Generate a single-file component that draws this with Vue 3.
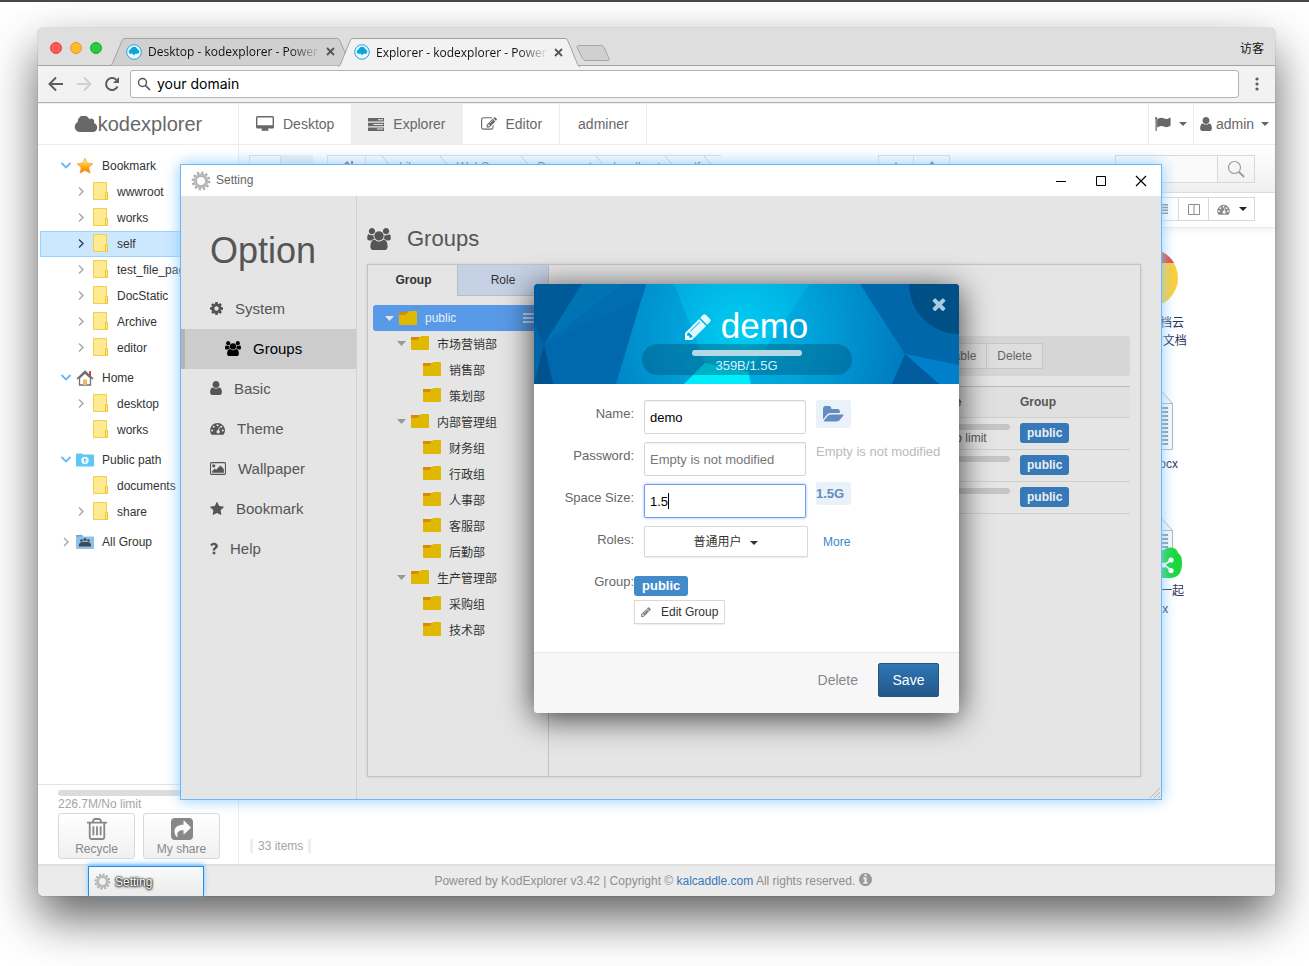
<script setup>
import { h, ref } from 'vue'

const glyphs = {
  cloud: ['0 256 2048 1280', 'M1984 1152q0 159-112.500 271.500t-271.500 112.500h-1088q-185 0-316.500-131.500t-131.500-316.500q0-132 71-241.500t187-163.500q-2-28-2-43 0-212 150-362t362-150q158 0 286.500 88t187.500 230q70-62 166-62 106 0 181 75t75 181q0 75-41 138 129 30 213 134.500t84 239.500z'],
  user: ['256 128 1280 1536', 'M1536 1399q0 109-62.500 187t-150.500 78h-854q-88 0-150.500-78t-62.500-187q0-85 8.500-160.500t31.500-152 58.500-131 94-89 134.500-34.500q131 128 313 128t313-128q76 0 134.500 34.500t94 89 58.500 131 31.500 152 8.500 160.500zm-256-887q0 159-112.500 271.500t-271.500 112.500-271.500-112.500-112.500-271.500 112.500-271.500 271.500-112.500 271.500 112.500 112.500 271.500z'],
  users: ['0 0 1920 1792', 'M593 896q-162 5-265 128h-134q-82 0-138-40.500t-56-118.500q0-353 124-353 6 0 43.500 21t97.500 42.500 119 21.500q67 0 133-23-5 37-5 66 0 139 81 256zm1071 637q0 120-73 189.500t-194 69.500h-874q-121 0-194-69.500t-73-189.500q0-53 3.500-103.500t14-109 26.500-108.500 43-97.500 62-81 85.500-53.500 111.500-20q10 0 43 21.500t73 48 107 48 135 21.500 135-21.500 107-48 73-48 43-21.500q61 0 111.500 20t85.500 53.500 62 81 43 97.500 26.500 108.500 14 109 3.500 103.500zm-1024-1277q0 106-75 181t-181 75-181-75-75-181 75-181 181-75 181 75 75 181zm704 384q0 159-112.500 271.500t-271.500 112.500-271.500-112.500-112.500-271.500 112.500-271.500 271.500-112.500 271.500 112.500 112.500 271.500zm576 225q0 78-56 118.500t-138 40.500h-134q-103-123-265-128 81-117 81-256 0-29-5-66 66 23 133 23 59 0 119-21.500t97.500-42.500 43.500-21q124 0 124 353zm-128-609q0 106-75 181t-181 75-181-75-75-181 75-181 181-75 181 75 75 181z'],
  cog: ['128 128 1536 1536', 'M1152 896q0-106-75-181t-181-75-181 75-75 181 75 181 181 75 181-75 75-181zm512-109v222q0 12-8 23t-20 13l-185 28q-19 54-39 91 35 50 107 138 10 12 10 25t-9 23q-27 37-99 108t-94 71q-12 0-26-9l-138-108q-44 23-91 38-16 136-29 186-7 28-36 28h-222q-14 0-24.500-8.500t-11.500-21.500l-28-184q-49-16-90-37l-141 107q-10 9-25 9-14 0-25-11-126-114-165-168-7-10-7-23 0-12 8-23 15-21 51-66.500t54-70.500q-27-50-41-99l-183-27q-13-2-21-12.500t-8-23.500v-222q0-12 8-23t19-13l186-28q14-46 39-92-40-57-107-138-10-12-10-24 0-10 9-23 26-36 98.500-107.500t94.500-71.500q13 0 26 10l138 107q44-23 91-38 16-136 29-186 7-28 36-28h222q14 0 24.500 8.500t11.500 21.500l28 184q49 16 90 37l142-107q9-9 24-9 13 0 25 10 129 119 165 170 7 8 7 22 0 12-8 23-15 21-51 66.500t-54 70.500q26 50 41 98l183 28q13 2 21 12.500t8 23.500z'],
  star: ['64 32 1664 1600', 'M1728 647q0 22-26 48l-363 354 86 500q1 7 1 20 0 21-10.500 35.500t-30.500 14.500q-19 0-40-12l-449-236-449 236q-22 12-40 12-21 0-31.500-14.500t-10.500-35.500q0-6 2-20l86-500-364-354q-25-27-25-48 0-37 56-46l502-73 225-455q19-41 49-41t49 41l225 455 502 73q56 9 56 46z'],
  picture: ['-64 128 1920 1536', 'M576 576q0 80-56 136t-136 56-136-56-56-136 56-136 136-56 136 56 56 136zm1024 384v448h-1408v-192l320-320 160 160 512-512zm96-704h-1600q-13 0-22.500 9.500t-9.500 22.500v1216q0 13 9.500 22.500t22.500 9.500h1600q13 0 22.500-9.500t9.500-22.500v-1216q0-13-9.500-22.500t-22.500-9.500zm160 32v1216q0 66-47 113t-113 47h-1600q-66 0-113-47t-47-113v-1216q0-66 47-113t113-47h1600q66 0 113 47t47 113z'],
  gauge: ['0 0 16 14', 'M8 1a8 8 0 0 0-8 8c0 1.600.4 3 1.200 4.200.2.300.4.400.7.400h12.200c.3 0 .5-.1.700-.4A8 8 0 0 0 8 1zM2.300 8a1.150 1.150 0 1 1 0 2.300 1.150 1.150 0 0 1 0-2.300zM4 4a1.150 1.150 0 1 1 0 2.300A1.150 1.150 0 0 1 4 4zM8 2.300a1.150 1.150 0 1 1 0 2.300 1.150 1.150 0 0 1 0-2.300zM9.600 5.200l.8.2-.8 3.500a1.800 1.800 0 1 1-.9-.2zM12 4a1.150 1.150 0 1 1 0 2.300A1.150 1.150 0 0 1 12 4zM13.700 8a1.150 1.150 0 1 1 0 2.300 1.150 1.150 0 0 1 0-2.300z'],
  question: ['0 0 8 14', 'M2.700 10.700h2.600v2.500H2.700zM2.700 9.600V8.900c0-1.400.8-2 1.500-2.500.7-.4 1-.7 1-1.300 0-.7-.6-1.100-1.300-1.100-.9 0-1.300.5-1.900 1.200L.3 3.900C1.100 2.500 2.300 1.800 4.100 1.800c2 0 3.800 1.300 3.800 3.200 0 1.600-1 2.300-1.800 2.800-.5.300-.8.500-.8 1v.8z'],
  trash: ['192 128 1408 1536', 'M704 736v576q0 14-9 23t-23 9h-64q-14 0-23-9t-9-23v-576q0-14 9-23t23-9h64q14 0 23 9t9 23zm256 0v576q0 14-9 23t-23 9h-64q-14 0-23-9t-9-23v-576q0-14 9-23t23-9h64q14 0 23 9t9 23zm256 0v576q0 14-9 23t-23 9h-64q-14 0-23-9t-9-23v-576q0-14 9-23t23-9h64q14 0 23 9t9 23zm128 724v-948h-896v948q0 22 7 40.500t14.500 27 10.500 8.500h832q3 0 10.500-8.500t14.500-27 7-40.500zm-672-1076h448l-48-117q-7-9-17-11h-317q-10 2-17 11zm928 32v64q0 14-9 23t-23 9h-96v948q0 83-47 143.500t-113 60.500h-832q-66 0-113-58.500t-47-141.500v-952h-96q-14 0-23-9t-9-23v-64q0-14 9-23t23-9h309l70-167q15-37 54-63t79-26h320q40 0 79 26t54 63l70 167h309q14 0 23 9t9 23z'],
  share: ['0 0 22 22', 'M4 0h14a4 4 0 0 1 4 4v14a4 4 0 0 1-4 4H4a4 4 0 0 1-4-4V4a4 4 0 0 1 4-4zM12.500 3.200v3.600C7 6.800 3.500 9 3.500 13.500c0 2 .8 4 2.300 5.400.5.300.9 0 .7-.6-.5-4.300 1-6 6-6v3.400c0 .6.5.8 1 .4l6-5.900c.4-.4.400-.8 0-1.200l-6-6c-.5-.4-1-.3-1 .2z'],
  pencil: ['128 128 1536 1536', 'M491 1536l91-91-235-235-91 91v107h128v128h107zm523-928q0-22-22-22-10 0-17 7l-542 542q-7 7-7 17 0 22 22 22 10 0 17-7l542-542q7-7 7-17zm-54-192l416 416-832 832h-416v-416zm683 96q0 53-37 90l-166 166-416-416 166-165q36-38 90-38 53 0 91 38l235 234q37 39 37 91z'],
  edit: ['0 128 1792 1536', 'M888 1184l116-116-152-152-116 116v56h96v96h56zm440-720q-16-16-33 1l-350 350q-17 17-1 33t33-1l350-350q17-17 1-33zm80 594v190q0 119-84.500 203.500t-203.500 84.500h-832q-119 0-203.500-84.500t-84.500-203.500v-832q0-119 84.500-203.500t203.500-84.500h832q63 0 117 25 15 7 18 23 3 17-9 29l-49 49q-14 14-32 8-23-6-45-6h-832q-66 0-113 47t-47 113v832q0 66 47 113t113 47h832q66 0 113-47t47-113v-126q0-13 9-22l64-64q15-15 35-7t20 29zm-96-738l288 288-672 672h-288v-288zm444 132l-92 92-288-288 92-92q28-28 68-28t68 28l152 152q28 28 28 68t-28 68z'],
  info: ['128 128 1536 1536', 'M1152 1376v-160q0-14-9-23t-23-9h-96v-512q0-14-9-23t-23-9h-320q-14 0-23 9t-9 23v160q0 14 9 23t23 9h96v320h-96q-14 0-23 9t-9 23v160q0 14 9 23t23 9h448q14 0 23-9t9-23zm-128-896v-160q0-14-9-23t-23-9h-192q-14 0-23 9t-9 23v160q0 14 9 23t23 9h192q14 0 23-9t9-23zm640 416q0 209-103 385.500t-279.500 279.500-385.500 103-385.500-103-279.500-279.500-103-385.500 103-385.500 279.500-279.500 385.500-103 385.500 103 279.500 279.500 103 385.500z'],
  folderOpen: ['-64 256 1920 1280', 'M1815 952q0 31-31 66l-336 396q-43 51-120.500 86.500t-143.500 35.500h-1088q-34 0-60.500-13t-26.500-43q0-31 31-66l336-396q43-51 120.500-86.500t143.500-35.500h1088q34 0 60.500 13t26.500 43zm-343-344v160h-832q-94 0-197 47.500t-164 119.500l-337 396-5 6q0-4-.5-12.500t-.5-12.500v-960q0-92 66-158t158-66h320q92 0 158 66t66 158v32h544q92 0 158 66t66 158z'],
  times: ['302 238 1188 1316', 'M1490 1322q0 40-28 68l-136 136q-28 28-68 28t-68-28l-294-294-294 294q-28 28-68 28t-68-28l-136-136q-28-28-28-68t28-68l294-294-294-294q-28-28-28-68t28-68l136-136q28-28 68-28t68 28l294 294 294-294q28-28 68-28t68 28l136 136q28 28 28 68t-28 68l-294 294 294 294q28 28 28 68z'],
  flag: ['0 0 16 14', 'M1.200 0a1.200 1.200 0 0 1 .6 2.200V13.500c0 .3-.2.5-.5.500H1c-.3 0-.5-.2-.5-.5V2.200A1.200 1.200 0 0 1 1.200 0zM2.600 2.100C4 1.300 5.300.8 6.600.8c1.900 0 2.900 1.200 4.500 1.200 1.200 0 2.400-.6 3.700-1.300.4-.2.8 0 .8.500v7.100c0 .3-.2.500-.5.700-1.300.7-2.500 1.200-3.800 1.200-1.900 0-2.900-1.200-4.800-1.200-1.200 0-2.400.5-3.700 1.200-.4.200-.7 0-.7-.3V2.700c0-.2.200-.4.500-.6z'],
  monitor: ['0 0 18 16', 'M1.500 0h15A1.500 1.500 0 0 1 18 1.500v9.500a1.500 1.500 0 0 1-1.500 1.500H12c0 .8.600 1.300.6 1.800 0 .3-.2.500-.5.500H5.900c-.3 0-.5-.2-.5-.5 0-.5.600-1 .6-1.800H1.500A1.500 1.500 0 0 1 0 11V1.500A1.500 1.500 0 0 1 1.500 0zM1.400 1.400V9.300h15.200V1.400z'],
  tasks: ['0 0 16 13', 'M0 0h16v3.500H0zM10 1.200v1h5v-1zM0 4.700h16v3.500H0zM5.500 5.900v1h9.500v-1zM0 9.400h16v3.500H0zM9 10.600v1h6v-1z'],
  caret: ['0 0 8 4', 'M0 0h8L4 4z'],
  branch: ['0 0 9 5', 'M0 0h9L4.500 5z'],
  lines: ['0 0 10 10', 'M0 0h10v1.500H0zM0 2.800h10v1.500H0zM0 5.600h10v1.500H0zM0 8.400h10v1.500H0z']
}
const Icon = (p) => h('svg', { viewBox: glyphs[p.name][0], width: p.w, height: p.h || p.w, fill: 'currentColor', 'aria-hidden': 'true' },
  [h('path', { d: glyphs[p.name][1], 'fill-rule': 'evenodd' })])
Icon.props = ['name', 'w', 'h']

// Metallic gear: a ring with twelve teeth around it
const Gear = (p) => h('svg', { viewBox: '0 0 20 20', width: p.w, height: p.w, fill: 'none', 'aria-hidden': 'true' }, [
  h('circle', { cx: 10, cy: 10, r: 8.2, stroke: '#a9abad', 'stroke-width': 2.4, 'stroke-dasharray': '2.200 2.093' }),
  h('circle', { cx: 10, cy: 10, r: 6, stroke: '#b9bbbd', 'stroke-width': 2.8 }),
  h('circle', { cx: 10, cy: 10, r: 4.6, stroke: '#9b9da0', 'stroke-width': 0.7 })
])
Gear.props = ['w']

const browserTabs = ['Desktop - kodexplorer - Power', 'Explorer - kodexplorer - Power']
const nav = [
  { label: 'Desktop', icon: 'monitor', w: 18, h: 16 },
  { label: 'Explorer', icon: 'tasks', w: 16, h: 13, on: true },
  { label: 'Editor', icon: 'edit', w: 16, h: 14 },
  { label: 'adminer' }
]
const places = [
  { label: 'Bookmark', kind: 'star', open: true, children: [
    { label: 'wwwroot', more: true }, { label: 'works', more: true }, { label: 'self', more: true, on: true },
    { label: 'test_file_page', more: true }, { label: 'DocStatic', more: true }, { label: 'Archive', more: true }, { label: 'editor', more: true }] },
  { label: 'Home', kind: 'home', open: true, children: [{ label: 'desktop', more: true }, { label: 'works' }] },
  { label: 'Public path', kind: 'public', open: true, children: [{ label: 'documents' }, { label: 'share', more: true }] },
  { label: 'All Group', kind: 'group', children: [] }
]
const crumbs = ['Library', 'WebServer', 'Document', 'localhost', 'self']
const options = [
  { label: 'System', icon: 'cog', w: 13, h: 13 },
  { label: 'Groups', icon: 'users', w: 16, h: 15, on: true },
  { label: 'Basic', icon: 'user', w: 12, h: 14 },
  { label: 'Theme', icon: 'gauge', w: 15, h: 13 },
  { label: 'Wallpaper', icon: 'picture', w: 16, h: 13 },
  { label: 'Bookmark', icon: 'star', w: 14, h: 13 },
  { label: 'Help', icon: 'question', w: 8, h: 14 }
]
const groups = [
  { label: '市场营销部', level: 1 }, { label: '销售部', level: 2 }, { label: '策划部', level: 2 },
  { label: '内部管理组', level: 1 }, { label: '财务组', level: 2 }, { label: '行政组', level: 2 },
  { label: '人事部', level: 2 }, { label: '客服部', level: 2 }, { label: '后勤部', level: 2 },
  { label: '生产管理部', level: 1 }, { label: '采购组', level: 2 }, { label: '技术部', level: 2 }
]
const users = ['22.6M/No limit', '', '']
const address = ref('your domain')
const search = ref('')
const name = ref('demo')
const password = ref('')
const size = ref('1.5')
const role = ref('普通用户')
</script>

<template>
  <div class="stage">
    <div class="browser">
      <div class="tabstrip">
        <div class="lights"><i class="red"></i><i class="amber"></i><i class="green"></i></div>
        <div v-for="(t, i) in browserTabs" :key="t" class="btab" :class="{ front: i === 1 }">
          <svg class="shape" viewBox="0 0 242 30" preserveAspectRatio="none" aria-hidden="true">
            <path d="M0 29.500C2 29 2 28 3 26L12 4Q13 1.500 15 1.500H227Q229 1.500 230 4L239 26C240 28 240 29 242 29.500" />
          </svg>
          <svg class="fav" viewBox="0 0 16 16" width="16" height="16" aria-hidden="true">
            <circle cx="8" cy="8" r="7.300" fill="#eaf8fd" stroke="#16a9dc" />
            <path d="M4.500 9.800a2.200 2.200 0 0 1 0-4.300 3.600 3.600 0 0 1 6.900-.3 2.400 2.400 0 0 1 .2 4.600H9.300L8 11.600 6.800 9.800z" fill="#0ba5da" />
          </svg>
          <span class="btitle">{{ t }}</span>
          <button class="bclose" aria-label="Close tab"><svg viewBox="0 0 9 9" width="9" height="9"><path d="M1 1l7 7M8 1l-7 7" stroke="#555" stroke-width="1.800" /></svg></button>
        </div>
        <button class="newtab" aria-label="New tab">
          <svg viewBox="0 0 34 17" width="34" height="17"><path d="M3 .5H25Q27 .5 28 2.500L33 13.500Q34 15.500 32 15.500H10Q7.500 15.500 6.500 13.500L1 2.500Q.3.500 3 .5z" fill="#d0d0d0" stroke="#a6a6a6" /></svg>
        </button>
        <span class="guest">访客</span>
      </div>

      <div class="addressbar">
        <button aria-label="Back"><svg viewBox="0 0 16 16" width="16" height="16"><path d="M8 1.500L1.500 8 8 14.500M2 8h13" fill="none" stroke="#5c5c5c" stroke-width="2" /></svg></button>
        <button aria-label="Forward"><svg viewBox="0 0 16 16" width="16" height="16"><path d="M8 1.500L14.500 8 8 14.500M14 8H1" fill="none" stroke="#d0d0d0" stroke-width="2" /></svg></button>
        <button aria-label="Reload"><svg viewBox="0 0 16 16" width="16" height="16"><path d="M13.500 10.500A6 6 0 1 1 12.300 3.800" fill="none" stroke="#5c5c5c" stroke-width="2" /><path d="M15 1v6H9z" fill="#5c5c5c" /></svg></button>
        <label class="omnibox">
          <svg viewBox="0 0 14 14" width="14" height="14" aria-hidden="true"><circle cx="5.500" cy="5.500" r="4" fill="none" stroke="#555" stroke-width="1.500" /><path d="M8.500 8.500l4.500 4.500" stroke="#555" stroke-width="1.700" /></svg>
          <input v-model="address" aria-label="Address" />
        </label>
        <button aria-label="Menu" class="kebab"><svg viewBox="0 0 4 14" width="4" height="14" fill="#5c5c5c"><circle cx="2" cy="2" r="1.600" /><circle cx="2" cy="7" r="1.600" /><circle cx="2" cy="12" r="1.600" /></svg></button>
      </div>

      <header class="apphead">
        <div class="logo"><Icon name="cloud" w="24" h="17" />kodexplorer</div>
        <nav>
          <a v-for="n in nav" :key="n.label" href="#" :class="{ on: n.on }"><Icon v-if="n.icon" :name="n.icon" :w="n.w" :h="n.h" />{{ n.label }}</a>
        </nav>
        <div class="account">
          <button class="lang" aria-label="Language"><Icon name="flag" w="16" h="14" /><Icon name="caret" w="8" h="4" /></button>
          <button class="me"><Icon name="user" w="12" h="14" /><span>admin</span><Icon name="caret" w="8" h="4" /></button>
        </div>
      </header>

      <div class="work">
        <aside class="side">
          <div class="tree">
            <section v-for="p in places" :key="p.label">
              <div class="node">
                <svg class="chev" viewBox="0 0 12 12" width="12" height="12"><path v-if="p.open" d="M1.500 3l4.500 4.500 4.500-4.500" fill="none" stroke="#6fb5f3" stroke-width="1.800" /><path v-else d="M4 2l4 4-4 4" fill="none" stroke="#a6a6a6" stroke-width="1.400" /></svg>
                <span class="pic">
                  <svg v-if="p.kind === 'star'" viewBox="0 0 18 17" width="18" height="17"><defs><linearGradient id="gold" x2="0" y2="1"><stop offset=".2" stop-color="#ffe27a" /><stop offset=".6" stop-color="#ffa60a" /><stop offset="1" stop-color="#f08000" /></linearGradient></defs><path d="M9 0l2.300 5.100 5.700.6-4.200 3.900 1.200 5.600L9 12.500l-5 2.700 1.200-5.600L1 5.700l5.700-.6z" fill="url(#gold)" stroke="#e99a2a" stroke-width=".6" /></svg>
                  <svg v-else-if="p.kind === 'home'" viewBox="0 0 18 16" width="18" height="16"><path d="M13 1h2v5h-2z" fill="#e0452c" /><path d="M3.500 8v7h11V8L9 3z" fill="#fff" stroke="#707070" stroke-width="1.300" /><path d="M1 9l8-7.500L17 9" fill="none" stroke="#6c6c6c" stroke-width="1.700" /><path d="M7 9.500h4V15H7z" fill="#f0b95e" /></svg>
                  <svg v-else-if="p.kind === 'public'" viewBox="0 0 18 14" width="18" height="14"><path d="M0 1.500Q0 .5 1 .5h5l1 1h10q1 0 1 1v10q0 1-1 1H1q-1 0-1-1z" fill="#5cc8f5" /><circle cx="9" cy="7.500" r="3.700" fill="#eefaff" /><path d="M8 5l3 2-2 1 1 2-2-1z" fill="#5cc8f5" /></svg>
                  <svg v-else viewBox="0 0 18 14" width="18" height="14"><path d="M0 1Q0 0 1 0h5l1 1.500h10q1 0 1 1V13q0 1-1 1H1q-1 0-1-1z" fill="#8fc1e8" /><path d="M0 1Q0 0 1 0h5l1 1.500H0z" fill="#6c9dc4" /><g fill="#3b4a58"><circle cx="9" cy="4.500" r="1.600" /><circle cx="5.500" cy="5.500" r="1.300" /><circle cx="12.500" cy="5.500" r="1.300" /><path d="M3 11.500V9Q4.500 6.500 7 7h4q2.500-.5 4 2v2.500z" /></g></svg>
                </span>
                {{ p.label }}
              </div>
              <div v-for="c in p.children" :key="c.label" class="node sub" :class="{ on: c.on }">
                <svg class="chev" viewBox="0 0 12 12" width="12" height="12"><path v-if="c.more" d="M4 1.500l4 4-4 4" fill="none" :stroke="c.on ? '#2f3f5f' : '#a6a6a6'" stroke-width="1.400" /></svg>
                <span class="pic"><svg viewBox="0 0 16 18" width="16" height="18"><path d="M.5.500h13v17H.5z" fill="#ffe991" stroke="#f0cf4a" /><path d="M12.500 10.500h2v7h-2z" fill="#ffe991" stroke="#ecc530" /></svg></span>
                {{ c.label }}
              </div>
            </section>
          </div>
          <div class="quota">
            <div class="meter"></div>
            <span>226.7M/No limit</span>
            <div class="pair">
              <button><Icon name="trash" w="20" h="22" />Recycle</button>
              <button><Icon name="share" w="22" />My share</button>
            </div>
          </div>
        </aside>

        <main class="main">
          <div class="bar1">
            <div class="seg"><button aria-label="Back in history"></button><button class="off" aria-label="Forward in history"></button></div>
            <div class="crumbs">
              <a href="#" class="house" aria-label="Home"><svg viewBox="0 0 16 14" width="16" height="14"><path d="M8 0L1 7h2v6h10V7h2z" fill="#666" /><path d="M12 0h2v4h-2z" fill="#e0452c" /></svg></a>
              <a v-for="c in crumbs" :key="c" href="#"><svg viewBox="0 0 17 26" width="17" height="26" aria-hidden="true"><path d="M0 0l11 13L0 26" fill="none" stroke="#ccc" /></svg><span>{{ c }}</span></a>
              <svg viewBox="0 0 17 26" width="17" height="26" aria-hidden="true"><path d="M0 0l11 13L0 26" fill="none" stroke="#ccc" /></svg>
            </div>
            <div class="seg tail"><button aria-label="Favourite"><Icon name="star" w="12" /></button><button aria-label="Up"><svg viewBox="0 0 12 14" width="12" height="14"><path d="M6 0L1 6h3v7h4V6h3z" fill="#777" /></svg></button></div>
            <div class="find"><input v-model="search" aria-label="Search" /><button aria-label="Search files"><svg viewBox="0 0 18 18" width="18" height="18"><circle cx="7.500" cy="7.500" r="6" fill="none" stroke="#a0a0a0" stroke-width="1.200" /><path d="M12 12l5 5" stroke="#999" stroke-width="1.800" /></svg></button></div>
          </div>
          <div class="bar2">
            <div class="views">
              <button aria-label="List view"><Icon name="lines" w="10" /></button>
              <button aria-label="Split view"><svg viewBox="0 0 12 11" width="12" height="11"><path d="M.5.500h11v10H.5zM6 .5v10" fill="none" stroke="#8c8c8c" /></svg></button>
              <button aria-label="Theme"><Icon name="gauge" w="13" h="11" /><Icon name="caret" w="8" h="4" class="dark" /></button>
            </div>
          </div>
          <div class="files">
            <figure>
              <svg viewBox="0 0 60 60" width="60" height="60"><circle cx="30" cy="30" r="29" fill="#fccf35" /><path d="M5 15a29 29 0 0 1 50 0H30a15 15 0 0 0-14 11z" fill="#de4b40" /><path d="M5 15l12 22 13 8-5 14A29 29 0 0 1 5 15z" fill="#3fa757" /><circle cx="29" cy="30" r="11" fill="#4a8af4" stroke="#fff" stroke-width="2" /></svg>
              <figcaption>可道云档云<br />KOD 的文档</figcaption>
            </figure>
            <figure>
              <svg viewBox="0 0 44 60" width="44" height="60"><path d="M.5.500h32l11 12v46H.5z" fill="#fbfcfd" stroke="#b0b6bb" /><path d="M32.500.500v12h11" fill="none" stroke="#b0b6bb" /><path d="M6 17h33M6 21h33M6 25h33M6 29h33M6 33h33M6 37h33M6 41h33M6 45h33M6 49h33M6 53h33" stroke="#8e9aa6" stroke-width="2" /></svg>
              <figcaption>kod.docx</figcaption>
            </figure>
            <figure class="shared">
              <svg viewBox="0 0 44 60" width="44" height="60"><path d="M.5.500h32l11 12v46H.5z" fill="#fbfcfd" stroke="#b0b6bb" /><path d="M32.500.500v12h11" fill="none" stroke="#b0b6bb" /><path d="M6 17h33M6 21h33M6 25h33M6 29h33M6 33h33M6 37h33" stroke="#8e9aa6" stroke-width="2" /></svg>
              <svg class="blob" viewBox="0 0 34 32" width="34" height="32"><path d="M8 31a8 8 0 0 1-2-15Q6 8 12 6Q16 0 22 .5Q28 1 29 6Q33 8 33 16Q33 30 22 31z" fill="#19d83a" /><path d="M22 13l-7 5 7 5" fill="none" stroke="#fff" stroke-width="1.600" /><g fill="#fff"><circle cx="22" cy="13" r="2.600" /><circle cx="14.500" cy="18" r="2.600" /><circle cx="22" cy="23.500" r="2.600" /></g></svg>
              <figcaption>我们在一起<br />.docx</figcaption>
            </figure>
          </div>
          <div class="count"><span>33 items</span></div>
        </main>
      </div>

      <footer class="foot">
        <p>Powered by KodExplorer v3.42 | Copyright © <a href="#">kalcaddle.com</a> All rights reserved. <Icon name="info" w="13" /></p>
        <button class="task"><Gear w="17" /><span>Setting</span></button>
      </footer>

      <section class="setting" aria-label="Setting">
        <div class="title">
          <Gear w="20" /><span>Setting</span>
          <div class="ctl">
            <button aria-label="Minimize"><svg viewBox="0 0 12 12" width="12" height="12"><path d="M1 6.500h10" stroke="#000" /></svg></button>
            <button aria-label="Maximize"><svg viewBox="0 0 12 12" width="12" height="12"><path d="M1.500 1.500h9v9h-9z" fill="none" stroke="#000" /></svg></button>
            <button aria-label="Close"><svg viewBox="0 0 12 12" width="12" height="12"><path d="M1 1l10 10M11 1L1 11" stroke="#000" stroke-width="1.200" /></svg></button>
          </div>
        </div>
        <div class="pane">
          <div class="opts">
            <h1>Option</h1>
            <a v-for="o in options" :key="o.label" href="#" :class="{ on: o.on }"><Icon :name="o.icon" :w="o.w" :h="o.h" />{{ o.label }}</a>
          </div>
          <div class="content">
            <h2><Icon name="users" w="24" h="22" />Groups</h2>
            <div class="panel">
              <div class="left">
                <div class="tabs"><button class="on">Group</button><button>Role</button></div>
                <div class="gtree">
                  <div class="grow root"><Icon name="branch" w="9" h="5" class="arr" /><svg class="fold" viewBox="0 0 18 14" width="18" height="14"><path d="M0 1.500h9l1-1.500h7q1 0 1 1v12q0 1-1 1H1q-1 0-1-1z" fill="#e0b800" /><path d="M0 1h9L7 3.500Q6 4 5 4H0z" fill="#d98a00" /></svg><span>public</span>
                    <svg class="burger" viewBox="0 0 12 10" width="12" height="10"><path d="M0 1h12M0 5h12M0 9h12" stroke="#dfeaf8" stroke-width="1.500" /></svg></div>
                  <div v-for="g in groups" :key="g.label" class="grow" :class="'lv' + g.level">
                    <Icon v-if="g.level === 1" name="branch" w="9" h="5" class="arr" />
                    <svg class="fold" viewBox="0 0 18 14" width="18" height="14"><path d="M0 1.500h9l1-1.500h7q1 0 1 1v12q0 1-1 1H1q-1 0-1-1z" fill="#e0b800" /><path d="M0 1h9L7 3.500Q6 4 5 4H0z" fill="#d98a00" /></svg><span>{{ g.label }}</span>
                  </div>
                </div>
              </div>
              <div class="right">
                <div class="acts"><button>Enable</button><button>Delete</button></div>
                <table>
                  <colgroup><col /><col class="cs" /><col class="cg" /></colgroup>
                  <thead><tr><th></th><th>Disk size</th><th>Group</th></tr></thead>
                  <tbody>
                    <tr v-for="(u, i) in users" :key="i"><td></td><td class="use"><div class="meter"></div>{{ u }}</td><td><b class="tag">public</b></td></tr>
                  </tbody>
                </table>
              </div>
            </div>
          </div>
        </div>
        <svg class="grip" viewBox="0 0 10 10" width="10" height="10" aria-hidden="true"><path d="M0 10L10 0M4 10l6-6M8 10l2-2" stroke="#aaa" stroke-width=".8" /></svg>

        <form class="modal" @submit.prevent>
          <div class="hero">
            <svg class="poly" viewBox="0 0 425 100" preserveAspectRatio="none" aria-hidden="true">
              <defs><radialGradient id="glow" gradientUnits="userSpaceOnUse" cx="208" cy="48" r="200"><stop offset="0" stop-color="#00cdf2" /><stop offset=".35" stop-color="#00b0e2" /><stop offset=".75" stop-color="#0084c6" /><stop offset="1" stop-color="#006aae" /></radialGradient></defs>
              <path d="M0 0h425v100H0z" fill="url(#glow)" />
              <path d="M112 0h28l31 79-21 21H82z" fill="#0077c0" fill-opacity=".3" />
              <path d="M276 0h50l45 70-13 30H217l-2-12z" fill="#0077c0" fill-opacity=".22" />
              <path d="M88 0h24L82 100H19L10 60z" fill="#0068ac" />
              <path d="M48 0h40L10 60z" fill="#0073b2" />
              <path d="M88 0h24l-4 14L10 60z" fill="#006db0" />
              <path d="M0 0h48L10 60 0 42z" fill="#005a98" />
              <path d="M0 42l10 18L0 100z" fill="#0064a6" />
              <path d="M10 60l9 40H0z" fill="#00518c" />
              <path d="M171 79l-21 21h67l-3-12z" fill="#00ecfa" />
              <path d="M326 0h99v81l-54-11z" fill="#0067ab" />
              <path d="M371 70l54 11v19h-20z" fill="#0080cb" />
              <path d="M371 70l34 30h-47z" fill="#005c9c" />
            </svg>
            <button type="button" class="x" aria-label="Close"><Icon name="times" w="14" /></button>
            <div class="who"><Icon name="pencil" w="26" /><strong>demo</strong></div>
            <div class="pill"><div class="meter"></div><span>359B/1.5G</span></div>
          </div>
          <div class="fields">
            <label for="f-name">Name:</label>
            <div class="val"><input id="f-name" v-model="name" /><button type="button" class="chip open" aria-label="Open folder"><Icon name="folderOpen" w="21" h="17" /></button></div>
            <label for="f-pass">Password:</label>
            <div class="val"><input id="f-pass" v-model="password" type="password" placeholder="Empty is not modified" /><span class="hint">Empty is not modified</span></div>
            <label for="f-size">Space Size:</label>
            <div class="val"><span class="typing"><input id="f-size" v-model="size" class="focus" /><i></i></span><span class="chip gb">1.5G</span></div>
            <label for="f-role">Roles:</label>
            <div class="val"><span class="pick"><select id="f-role" v-model="role"><option>普通用户</option></select><Icon name="caret" w="8" h="4" /></span><a href="#" class="more">More</a></div>
            <span class="lab">Group:</span>
            <div class="grp"><b class="tag">public</b><button type="button"><Icon name="pencil" w="10" />Edit Group</button></div>
          </div>
          <div class="end"><button type="button" class="del">Delete</button><button type="submit" class="save">Save</button></div>
        </form>
      </section>
    </div>
  </div>
</template>

<style>
html, body { margin: 0; background: #fff; }
</style>

<style scoped>
.stage, .stage * { box-sizing: border-box; }
.stage { min-height: 100vh; padding: 26px 34px 70px 38px; border-top: 2px solid #4a4748; display: flex; overflow: hidden; font: 12px "Liberation Sans", "Noto Sans CJK SC", sans-serif; color: #333; }
button, input, select { font: inherit; color: inherit; margin: 0; padding: 0; border: 0; background: none; outline: 0; }
button { display: flex; align-items: center; justify-content: center; }
a { color: inherit; text-decoration: none; }
svg { display: block; flex: none; }
.browser { position: relative; flex: 1; min-width: 0; display: flex; flex-direction: column; border-radius: 5px; background: #fff; box-shadow: 0 0 1px rgba(0,0,0,.6), 0 22px 48px rgba(0,0,0,.62); }

.tabstrip { height: 38px; background: #dedede; border-bottom: 1px solid #a2a2a2; border-radius: 5px 5px 0 0; display: flex; padding: 9px 11px 0 12px; }
.lights { display: flex; gap: 8px; padding-top: 5px; width: 60px; }
.lights i { width: 12px; height: 12px; border-radius: 50%; }
.red { background: #fc5b57; border: 1px solid #e2443f; }
.amber { background: #fdbc2f; border: 1px solid #dfa023; }
.green { background: #29ca41; border: 1px solid #1eac2c; }
.btab { position: relative; width: 242px; height: 29px; padding: 0 17px 0 16px; display: flex; align-items: center; color: #111; }
.btab.front { margin-left: -14px; height: 30px; }
.shape { position: absolute; left: 0; top: 0; width: 100%; height: 29px; fill: #d0d0d0; stroke: #a2a2a2; }
.front .shape { fill: #f2f2f2; height: 30px; }
.fav, .btitle, .bclose { position: relative; }
.btitle { flex: 1; margin: 0 5px 0 6px; white-space: nowrap; font-family: "Open Sans", sans-serif; font-size: 12px; mask-image: linear-gradient(90deg, #000 82%, transparent 100%); }
.newtab { margin: 8px 0 0 -4px; height: 17px; }
.guest { margin-left: auto; padding-top: 2px; color: #111; }

.addressbar { height: 37px; background: #f2f2f2; border-bottom: 1px solid #b2b2b2; display: flex; align-items: center; gap: 12px; padding: 0 16px 0 10px; }
.omnibox { flex: 1; height: 28px; display: flex; align-items: center; gap: 6px; padding: 0 6px; border: 1px solid #b4b4b4; border-radius: 3px; background: #fff; margin-left: -2px; }
.omnibox input { flex: 1; font: 14px Inter, sans-serif; color: #000; padding-bottom: 2px; }
.kebab { width: 4px; margin-left: 4px; }

.apphead { height: 42px; display: flex; border-top: 1px solid #f0f0f0; border-bottom: 1px solid #ececec; color: #686868; font-size: 14px; }
.logo { width: 201px; display: flex; align-items: center; justify-content: center; font-size: 20px; border-right: 1px solid #ececec; }
nav { display: flex; }
nav a { display: flex; align-items: center; gap: 9px; padding: 0 17px; }
nav a.on { background: #eee; }
nav a:nth-child(n+3) { border-right: 1px solid #ececec; padding: 0 17px 0 18px; }
.account { margin-left: auto; display: flex; }
.account button { border-left: 1px solid #ececec; }
.lang { width: 45px; gap: 8px; }
.me { width: 82px; }
.me span { margin: 0 7px 0 4px; }

.work { flex: 1; display: flex; min-height: 0; }
.side { width: 201px; border-right: 1px solid #ececec; display: flex; flex-direction: column; }
.tree { flex: 1; padding: 8px 0 0 2px; }
.tree section { padding-bottom: 4px; }
.node { height: 26px; display: flex; align-items: center; padding-left: 20px; white-space: nowrap; overflow: hidden; }
.node.sub { padding-left: 35px; }
.node.on { background: #cce8ff; box-shadow: inset 0 0 0 1px #99d1ff; }
.chev { margin-right: 3px; }
.pic { width: 20px; margin-right: 7px; display: flex; justify-content: center; flex: none; }
.sub .chev { margin-right: 4px; }
.sub .pic { margin-right: 6px; padding: 0 1px 2px 0; }
.quota { border-top: 1px solid #e2e2e2; padding: 5px 18px 5px 20px; color: #a5a5a5; line-height: 16px; }
.meter { height: 6px; border-radius: 3px; background: #dcdcdc; }
.quota span { display: block; }
.pair { display: flex; gap: 8px; padding-top: 1px; }
.pair button { width: 77px; height: 46px; flex-direction: column; border: 1px solid #d9d9d9; border-radius: 3px; background: linear-gradient(#fff, #f0f0f0); color: #888; line-height: 18px; padding-top: 3px; }

.main { flex: 1; min-width: 0; display: flex; flex-direction: column; }
.bar1 { height: 48px; padding: 10px 20px 0 10px; display: flex; border-bottom: 1px solid #ddd; background: linear-gradient(#fff, #f0f0f0); color: #666; }
.seg { display: flex; height: 28px; }
.seg button { width: 32px; border: 1px solid #ddd; }
.seg button + button { border-left: 0; }
.seg .off { background: #eee; border-color: #eee; }
.crumbs { display: flex; height: 28px; margin-left: 14px; border: solid #ddd; border-width: 1px 0 1px 1px; }
.crumbs a { display: flex; align-items: center; }
.crumbs span { padding: 0 4px 4px 0; }
.crumbs .house { width: 38px; padding-bottom: 2px; justify-content: center; border-right: 1px solid #ddd; margin-right: 16px; }
.seg.tail { margin-left: auto; margin-right: 165px; }
.tail button { width: 36px; background: #fafafa; padding-bottom: 2px; }
.find { display: flex; height: 28px; }
.find input { width: 102px; border: 1px solid #d9d9d9; border-right: 0; background: #fafafa; }
.find button { width: 38px; border: 1px solid #d9d9d9; background: linear-gradient(#fafafa, #f2f2f2); }
.bar2 { height: 35px; border-bottom: 1px solid #e8e8e8; padding: 4px 20px 0; display: flex; justify-content: flex-end; box-shadow: 0 3px 8px rgba(0,0,0,.05); }
.views { display: flex; height: 24px; border: 1px solid #d9d9d9; color: #8c8c8c; background: #fff; }
.views button { width: 30px; }
.views button + button { border-left: 1px solid #d9d9d9; }
.views button:last-child { width: 46px; gap: 9px; }
.dark { color: #222; }
.files { flex: 1; width: 100px; margin-left: auto; margin-right: 71px; display: flex; flex-direction: column; color: #2b3158; line-height: 18px; padding-top: 20px; }
figure { margin: 0; height: 127px; display: flex; flex-direction: column; align-items: center; text-align: center; position: relative; }
figure:first-child { height: 143px; }
figure:first-child svg { margin: 0 10px 4px 0; }
figcaption { padding-top: 2px; white-space: nowrap; }
figure + figure svg { margin-right: 6px; }
figure + figure .blob { position: absolute; right: 21px; top: 29px; margin: 0; }
figure + figure figcaption { padding-top: 4px; }
.count { padding: 0 0 11px 11px; color: #a5a5a5; }
.count span { border: solid #eee; border-width: 0 3px; padding: 0 5px; }

.foot { height: 32px; display: grid; background: #ebebeb; border-top: 2px solid #e0e0e0; border-radius: 0 0 5px 5px; color: #8f8f8f; }
.foot > * { grid-area: 1 / 1; }
.foot p { margin: 0; padding-right: 7px; text-align: center; line-height: 30px; }
.foot p a { color: #337ab7; }
.foot p svg { display: inline-block; vertical-align: -1px; color: #999; }
.task { position: relative; margin-left: 50px; width: 116px; height: 30px; justify-content: flex-start; gap: 4px; padding-left: 5px; border: 1px solid #1b8ff5; border-bottom: 0; background: linear-gradient(#fafafa, #ebebeb); box-shadow: 0 -2px 5px #7fc4ff; }
.task span { color: #fff; text-shadow: 0 0 2px #000, 0 0 2px #000, 0 1px 3px #333; }

.setting { position: absolute; left: 142px; right: 113px; top: 136px; bottom: 96px; border: 1px solid #6db7f6; background: #e5e5e5; box-shadow: 0 0 14px #8ccbff; display: flex; flex-direction: column; color: #555; }
.title { height: 31px; background: #fff; display: flex; align-items: center; padding-left: 10px; gap: 5px; color: #666; }
.title > span { padding-bottom: 2px; }
.ctl { margin-left: auto; display: flex; }
.ctl button { width: 40px; height: 31px; }
.pane { flex: 1; display: flex; min-height: 0; }
.opts { width: 176px; border-right: 1px solid #d2d2d2; padding-top: 33px; }
h1 { margin: 0 0 17px; padding-left: 29px; font-size: 36px; line-height: 43px; font-weight: 400; height: 43px; }
.opts a { height: 40px; display: flex; align-items: center; gap: 12px; padding: 0 0 2px 29px; font-size: 15px; }
.opts a.on { background: #ccc; border-left: 4px solid #b4b4b4; padding-left: 40px; color: #000; }
.content { flex: 1; min-width: 0; display: flex; flex-direction: column; padding: 26px 20px 22px 10px; }
h2 { margin: 0 0 10px; height: 32px; padding-top: 2px; display: flex; align-items: center; gap: 16px; font-size: 22px; font-weight: 400; }
.panel { flex: 1; display: flex; border: 1px solid #c3c3c3; box-shadow: 0 0 3px rgba(0,0,0,.12); }
.left { width: 181px; border-right: 1px solid #c3c3c3; }
.tabs { display: flex; height: 31px; }
.tabs button { flex: 1; color: #333; }
.tabs button.on { flex: 0 0 89px; font-weight: 700; padding: 0 0 2px 2px; }
.tabs button:not(.on) { background: #c5d1e5; border: solid #b9bdc5; border-width: 0 0 1px 1px; }
.gtree { padding: 9px 0 0 5px; }
.grow { height: 26px; display: flex; align-items: center; padding-bottom: 2px; color: #333; }
.grow.lv1 { padding-left: 24px; }
.grow.root { background: #589ae8; border-radius: 3px 0 0 3px; padding: 0 0 0 12px; color: #e5eefa; }
.arr { color: #999; margin-right: 5px; }
.root .arr { color: #e5e5e5; }
.grow.lv2 { padding-left: 50px; }
.fold { margin-right: 8px; }
.burger { margin-left: auto; margin-right: 13px; }
.right { flex: 1; min-width: 0; padding: 71px 10px 0 11px; }
.acts { height: 40px; background: #d6d6d6; border-radius: 3px; display: flex; justify-content: flex-end; align-items: center; padding-right: 87px; margin-bottom: 10px; }
.acts button { height: 26px; padding: 0 10px; background: #dedede; border: 1px solid #c8c8c8; color: #666; }
.acts button + button { border-left: 0; }
table { width: 100%; border-collapse: collapse; table-layout: fixed; }
.cs { width: 110px; }
.cg { width: 110px; }
th { height: 31px; text-align: left; background: #e0e0e0; border-top: 1px solid #bbb; border-bottom: 1px solid #cfcfcf; padding: 0; }
td { height: 32px; border-bottom: 1px solid #d0d0d0; padding: 0 0 2px; }
.use { vertical-align: top; padding: 6px 10px 0 0; line-height: 17px; white-space: nowrap; }
.use .meter { background: #c5c5c5; }
.tag { display: inline-block; background: #3779b7; color: #eee; border-radius: 3px; padding: 0 7px; line-height: 20px; font-size: 12px; }
.grip { position: absolute; right: 1px; bottom: 1px; }

.modal { position: absolute; left: 353px; top: 119px; width: 425px; border-radius: 4px; background: #fff; box-shadow: 0 5px 32px rgba(0,0,0,.75); overflow: hidden; font-size: 13px; color: #666; }
.hero { position: relative; height: 100px; display: flex; flex-direction: column; align-items: center; color: #fff; }
.poly { position: absolute; inset: 0; width: 100%; height: 100%; }
.x { position: absolute; right: 0; top: 0; width: 50px; height: 50px; border-radius: 0 0 0 50px; background: #004f85; color: #a5cde4; padding: 0 0 10px 10px; }
.who { position: relative; height: 60px; display: flex; align-items: center; gap: 10px; padding-top: 23px; }
.who strong { font-weight: 400; font-size: 35px; line-height: 36px; }
.who svg { margin-top: 3px; color: #e0fbff; }
.pill { position: relative; width: 210px; height: 31px; border-radius: 16px; background: rgba(0,70,100,.35); padding: 6px 50px 0; text-align: center; line-height: 19px; color: #d5f2fb; }
.pill .meter { background: #b5d8e4; }
.pill span { display: block; }
.fields { display: grid; grid-template-columns: 100px 1fr; padding: 16px 0 28px; row-gap: 8px; }
.fields > label, .lab { text-align: right; line-height: 27px; }
.val { display: flex; align-items: flex-start; padding-left: 10px; height: 34px; }
.val input { width: 162px; height: 34px; border: 1px solid #d5d5d5; border-radius: 2px; padding: 0 5px; color: #000; box-shadow: inset 0 1px 1px rgba(0,0,0,.06); background: #fff; }
.val input::placeholder { color: #777; opacity: 1; }
.val .focus { border-color: #6f9df0; box-shadow: 0 0 3px #8fb4f5; }
.typing { position: relative; display: flex; }
.typing i { position: absolute; left: 24px; top: 9px; width: 1px; height: 16px; background: #000; }
.chip { margin-left: 10px; background: #e9f1f9; color: #658cc2; border-radius: 3px; width: 35px; }
.chip.open { height: 28px; }
.chip.gb { height: 23px; line-height: 23px; font-weight: 700; margin-top: -2px; }
.hint { margin-left: 10px; line-height: 19px; color: #bbb; white-space: nowrap; }
.pick { position: relative; display: flex; }
.pick select { appearance: none; width: 164px; height: 31px; border: 1px solid #d9d9d9; border-radius: 1px; box-shadow: 0 1px 1px rgba(0,0,0,.08); font-size: 12px; color: #333; text-align: center; text-align-last: center; padding-right: 17px; }
.pick svg { position: absolute; left: 106px; top: 15px; color: #333; }
.more { margin-left: 15px; line-height: 32px; font-size: 12px; color: #3a87c8; }
.grp { display: flex; flex-direction: column; align-items: flex-start; gap: 4px; padding-top: 8px; }
.grp .tag { background: #428bca; color: #fff; font-size: 13px; padding: 0 8px; }
.grp button { height: 24px; border: 1px solid #d9d9d9; padding: 0 6px; gap: 10px; font-size: 12px; color: #333; box-shadow: 0 1px 1px rgba(0,0,0,.06); }
.grp svg { color: #888; }
.end { height: 61px; background: #f7f7f7; border-top: 1px solid #e8e8e8; display: flex; justify-content: flex-end; align-items: center; padding: 0 20px 6px; gap: 20px; font-size: 14px; color: #888; }
.save { width: 61px; height: 34px; border: 1px solid #235583; border-radius: 2px; background: linear-gradient(#2f76b5, #23578a); color: #fff; }
</style>
